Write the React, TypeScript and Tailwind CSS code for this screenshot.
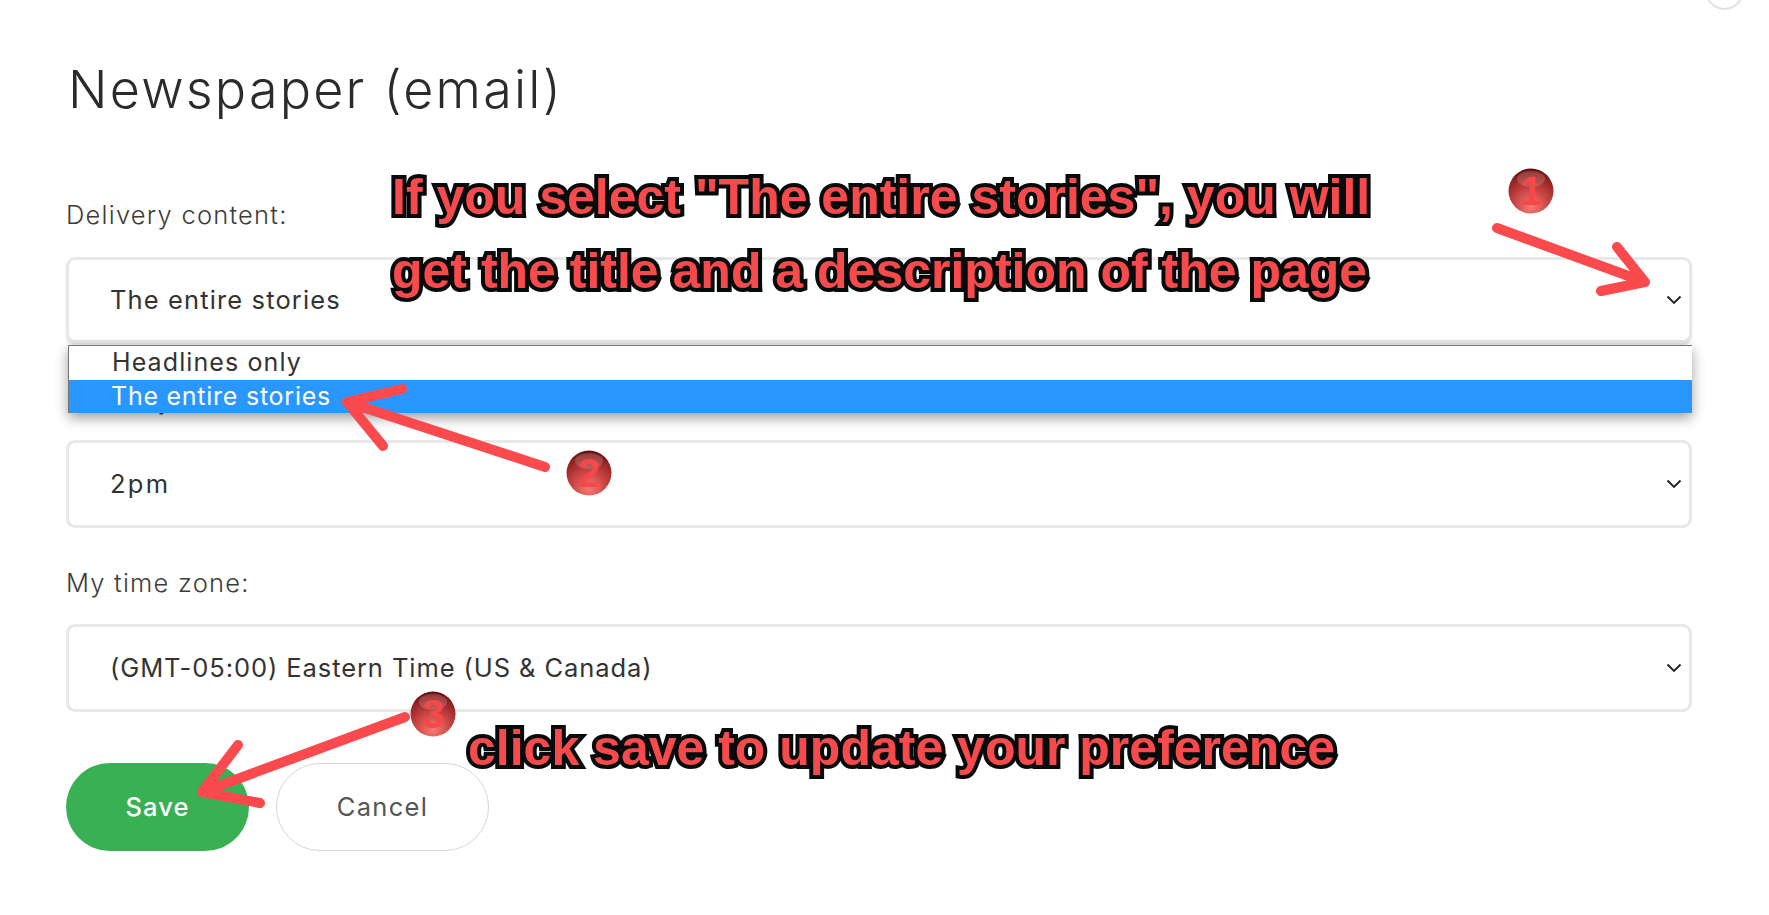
import React from "react";

const Chevron = () => (
  <svg width="16" height="10" viewBox="0 0 16 10" className="shrink-0 mr-[7px]" fill="none">
    <path d="M1.5 1.5 L8 8 L14.5 1.5" stroke="#222" strokeWidth="1.9" />
  </svg>
);

const Select = ({ value, heightClass, trackingClass }: { value: string; heightClass: string; trackingClass: string }) => (
  <div className={`flex items-center justify-between ${heightClass} border-[3px] border-[#e8e8e8] rounded-[9px] bg-white pl-[41px]`}>
    <span className={`text-[25.5px] text-[#333] font-normal ${trackingClass}`}>{value}</span>
    <Chevron />
  </div>
);

const Label = ({ children, className }: { children: string; className: string }) => (
  <div className={`text-[25.5px] leading-[30px] font-light tracking-[0.048em] text-[#3c3c3c] ${className}`}>{children}</div>
);

const Badge = ({ n, x, y }: { n: string; x: number; y: number }) => (
  <svg className="absolute" style={{ left: x, top: y }} width="46" height="46" viewBox="0 0 46 46">
    <defs>
      <radialGradient id={`b${n}`} cx="50%" cy="85%" r="85%">
        <stop offset="0%" stopColor="#f77a72" />
        <stop offset="45%" stopColor="#c94545" />
        <stop offset="85%" stopColor="#8f2020" />
        <stop offset="100%" stopColor="#5c0d0d" />
      </radialGradient>
    </defs>
    <circle cx="23" cy="23" r="22.5" fill={`url(#b${n})`} />
    <ellipse cx="23" cy="11" rx="14" ry="8" fill="#ffffff" opacity="0.16" />
    <text x="23" y="37" textAnchor="middle" fontFamily="'Liberation Sans', Arial, sans-serif" fontWeight="700" fontSize="40" fill="#f54848">{n}</text>
  </svg>
);

const Arrow = ({ d }: { d: string }) => (
  <path d={d} fill="none" stroke="#fb4a4d" strokeWidth="10" strokeLinecap="round" strokeLinejoin="round" />
);

const Note = ({ children, className }: { children: string; className: string }) => (
  <div
    className={`absolute whitespace-nowrap font-bold text-[#f64a4c] text-[50px] leading-[60px] tracking-normal [-webkit-text-stroke:8px_#050a0a] [paint-order:stroke_fill] [font-family:'Liberation_Sans',Arial,sans-serif] ${className}`}
  >
    {children}
  </div>
);

export default function App() {
  return (
    <div className="relative h-[915px] w-full overflow-hidden bg-white [font-family:Inter,'Liberation_Sans',sans-serif]">
      <div className="absolute left-[1705px] top-[-29px] h-[39px] w-[39px] rounded-full border-2 border-[#e2e2e2]" />

      <div className="pl-[66px] pr-[77px] pt-[60px]">
        <h1 className="ml-[2px] text-[52px] leading-[60px] font-light tracking-[0.043em] text-[#2b2b2b]">Newspaper (email)</h1>

        <Label className="mt-[80px]">Delivery content:</Label>
        <Select value="The entire stories" trackingClass="tracking-[0.044em]" heightClass="mt-[27px] h-[86px] shadow-[0_2px_2px_rgba(0,0,0,0.12)]" />

        <Label className="mt-[42px]">Delivery time:</Label>
        <Select value="2pm" trackingClass="tracking-[0.09em]" heightClass="mt-[25px] h-[88px]" />

        <Label className="mt-[40px]">My time zone:</Label>
        <Select value="(GMT-05:00) Eastern Time (US & Canada)" trackingClass="tracking-[0.036em]" heightClass="mt-[26px] h-[88px]" />

        <div className="mt-[51px] flex gap-[27px]">
          <button className="h-[88px] w-[183px] rounded-full bg-[#3ab054] text-[25.5px] font-medium tracking-[0.04em] text-white">Save</button>
          <button className="h-[88px] w-[213px] rounded-full border border-[#d6d6d6] bg-white text-[25.5px] tracking-[0.05em] text-[#555]">Cancel</button>
        </div>
      </div>

      <div className="absolute left-[68px] top-[345px] w-[1624px] border-l border-t border-[#767676] border-r-0 bg-white text-[25px] shadow-[0_5px_12px_rgba(0,0,0,0.38)]">
        <div className="h-[34px] pl-[43px] leading-[33px] tracking-[0.044em] text-[#333]">Headlines only</div>
        <div className="h-[33px] bg-[#2997ff] pl-[42px] leading-[32px] tracking-[0.03em] text-white">The entire stories</div>
      </div>

      <Note className="left-[392px] top-[167px]">If you select "The entire stories", you will</Note>
      <Note className="left-[392px] top-[241px]">get the title and a description of the page</Note>
      <Note className="left-[468px] top-[718px]">click save to update your preference</Note>

      <svg className="absolute left-0 top-0" width="1769" height="915" viewBox="0 0 1769 915">
        <Arrow d="M1497 228 L1645 282 M1617 247 L1645 282 L1601 291" />
        <Arrow d="M545 467 L347 402 M402 389 L347 402 L383 446" />
        <Arrow d="M405 717 L202 792 M238 745 L202 792 L260 803" />
      </svg>

      <Badge n="1" x={1508} y={168} />
      <Badge n="2" x={566} y={450} />
      <Badge n="3" x={410} y={691} />
    </div>
  );
}
